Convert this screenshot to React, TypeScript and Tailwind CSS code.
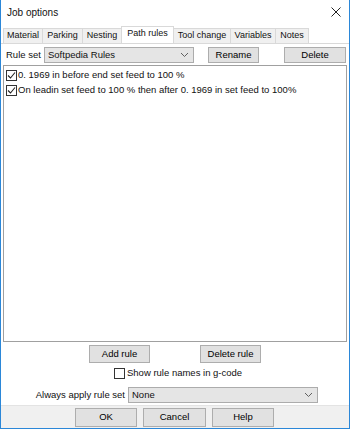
import React from "react";

const font = { fontFamily: '"Liberation Sans", Arial, sans-serif' };

function Check({ checked }: { checked?: boolean }) {
  return (
    <div className="w-[11px] h-[11px] border border-[#333333] bg-white flex items-center justify-center shrink-0">
      {checked && (
        <svg width="9" height="9" viewBox="0 0 9 9">
          <polyline points="1,4.5 3.5,7 8,1.5" fill="none" stroke="#222" strokeWidth="1.1" />
        </svg>
      )}
    </div>
  );
}

function Chevron() {
  return (
    <svg width="9" height="6" viewBox="0 0 9 6">
      <polyline points="1,1 4.5,4.5 8,1" fill="none" stroke="#606060" strokeWidth="1" />
    </svg>
  );
}

function Btn({ children, className }: { children: React.ReactNode; className?: string }) {
  return (
    <div
      className={
        "h-[18px] border border-[#adadad] bg-[#e1e1e1] flex items-center justify-center text-[9.5px] text-black " +
        (className || "")
      }
    >
      {children}
    </div>
  );
}

const tabs = [
  { name: "Material", w: 40 },
  { name: "Parking", w: 41 },
  { name: "Nesting", w: 40 },
  { name: "Path rules", w: 53, sel: true },
  { name: "Tool change", w: 58 },
  { name: "Variables", w: 46 },
  { name: "Notes", w: 34 },
];

export default function App() {
  return (
    <div
      style={font}
      className="w-[350px] h-[429px] bg-white border-l border-r border-b border-[#2b87d8] flex flex-col text-[#111] overflow-hidden"
    >
      {/* title bar */}
      <div className="h-[27px] shrink-0 flex items-center justify-between pl-[6px] pr-[8px] pb-[3px]">
        <span className="text-[10px]">Job options</span>
        <svg width="10" height="10" viewBox="0 0 10 10">
          <path d="M0.5 0.5 L9.5 9.5 M9.5 0.5 L0.5 9.5" stroke="#222" strokeWidth="1" />
        </svg>
      </div>
      {/* tabs */}
      <div className="h-[16px] shrink-0 flex items-end pl-[2px]">
        {tabs.map((t) => (
          <div
            key={t.name}
            style={{ width: t.w }}
            className={
              "flex items-center justify-center text-[9px] border-t border-l border-r border-[#d9d9d9] -mr-[1px] " +
              (t.sel ? "h-[17px] bg-white relative z-10 pb-[2px]" : "h-[15px] bg-[#f0f0f0]")
            }
          >
            {t.name}
          </div>
        ))}
      </div>
      {/* tab page */}
      <div className="flex-1 border-t border-[#d9d9d9] bg-white flex flex-col pl-[2px] pr-[2px]">
        <div className="flex items-center h-[16px] mt-[3px]">
          <span className="text-[9.5px] ml-[3px] w-[38px] whitespace-nowrap">Rule set</span>
          <div className="w-[150px] h-[16px] border border-[#acacac] bg-[#e5e5e5] flex items-center justify-between pl-[3px] pr-[4px]">
            <span className="text-[9.5px]">Softpedia Rules</span>
            <Chevron />
          </div>
          <Btn className="w-[51px] ml-[14px] !h-[16px]">Rename</Btn>
          <Btn className="w-[62px] ml-[25px] !h-[16px]">Delete</Btn>
        </div>
        <div className="mt-[2px] h-[277px] w-[344px] border border-[#a0a0a0] bg-white flex flex-col pt-[2px] pl-[2px]">
          <div className="flex items-center h-[15px] gap-[1px]">
            <Check checked />
            <span className="text-[9.5px] whitespace-nowrap">0. 1969 in before end set feed to 100 %</span>
          </div>
          <div className="flex items-center h-[15px] gap-[1px]">
            <Check checked />
            <span className="text-[9.5px] whitespace-nowrap">
              On leadin set feed to 100 % then after 0. 1969 in set feed to 100%
            </span>
          </div>
        </div>
        <div className="flex mt-[3px]">
          <Btn className="w-[61px] ml-[86px]">Add rule</Btn>
          <Btn className="w-[61px] ml-[50px]">Delete rule</Btn>
        </div>
        <div className="flex items-center mt-[4px] ml-[111px] gap-[2px] h-[12px]">
          <Check />
          <span className="text-[9.5px]">Show rule names in g-code</span>
        </div>
        <div className="flex items-center mt-[8px] h-[16px]">
          <span className="text-[9.5px] w-[122px] text-right whitespace-nowrap">Always apply rule set</span>
          <div className="ml-[3px] w-[190px] h-[16px] border border-[#acacac] bg-[#e5e5e5] flex items-center justify-between pl-[3px] pr-[4px]">
            <span className="text-[9.5px]">None</span>
            <Chevron />
          </div>
        </div>
      </div>
      {/* bottom */}
      <div className="h-[23px] shrink-0 bg-[#f0f0f0] border-t border-[#e3e3e3] flex items-start pt-[2px] pl-[74px] gap-[6px]">
        <Btn className="w-[62px] !h-[19px]">OK</Btn>
        <Btn className="w-[63px] !h-[19px]">Cancel</Btn>
        <Btn className="w-[62px] !h-[19px]">Help</Btn>
      </div>
    </div>
  );
}
